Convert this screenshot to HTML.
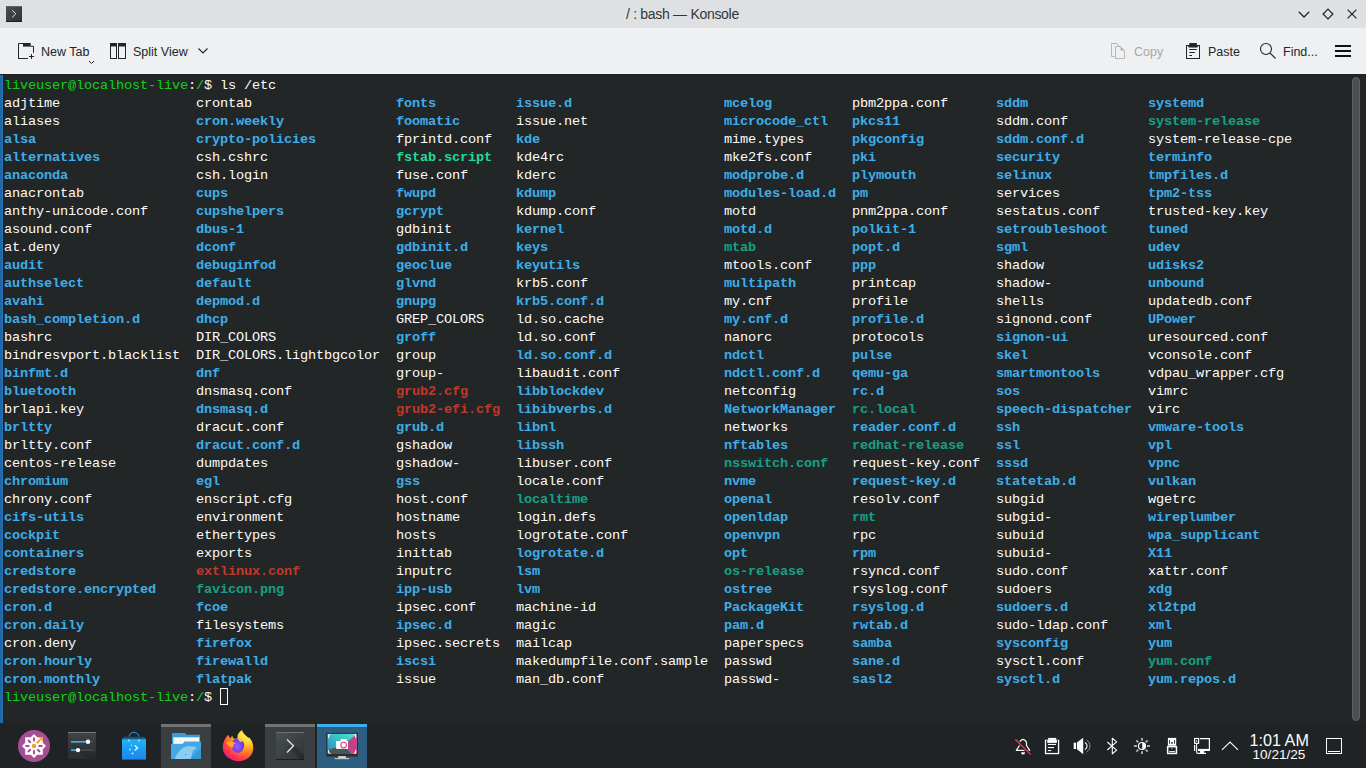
<!DOCTYPE html>
<html><head><meta charset="utf-8">
<style>
*{margin:0;padding:0;box-sizing:border-box}
html,body{width:1366px;height:768px;overflow:hidden;background:#232627}
body{position:relative;font-family:"Liberation Sans",sans-serif}
svg{position:absolute;overflow:visible}
#title{position:absolute;left:0;top:0;width:1366px;height:28px;background:#dee0e2}
#toolbar{position:absolute;left:0;top:28px;width:1366px;height:46px;background:#eff0f1}
#tline{position:absolute;left:0;top:74px;width:1366px;height:1px;background:#1d2023}
#term{position:absolute;left:0;top:75px;width:1366px;height:648px;background:#232627;overflow:hidden}
#strip{position:absolute;left:0;top:0;width:3px;height:648px;background:#2167a3;border-right:1px solid #2974b3}
#stripb{position:absolute;left:3px;top:0;width:1px;height:648px;background:#1e2122}
#bline{position:absolute;left:0;top:723px;width:1366px;height:1px;background:#252426}
#panel{position:absolute;left:0;top:724px;width:1366px;height:44px;background:#202326}
.mono{font-family:"Liberation Mono",monospace;font-size:13.6px;letter-spacing:-0.16px;line-height:18px;color:#fcfcfc;white-space:pre}
.col{position:absolute;top:20px}
.prompt{position:absolute;left:4px}
.g{color:#11d116}
b{font-weight:bold}
b.b{color:#3daee9}
b.l{color:#16a085}
b.x{color:#1cdc9a}
b.r{color:#c0392b}
.t{position:absolute;white-space:nowrap}
#scroll{position:absolute;left:1352px;top:2px;width:8px;height:644px;border-radius:4px;background:#4d4f51;border:1px solid #5e6163}
#cursor{position:absolute;left:220px;top:613px;width:8px;height:17px;border:1px solid #fcfcfc}
.tb{font-size:12.5px;color:#232629}
.task{position:absolute;top:0;width:50px;height:44px;background:#3b3e41;border-top:3px solid #707274}
</style></head><body>
<div id="title">
 <svg style="left:6px;top:6px" width="16" height="16" viewBox="0 0 16 16">
  <defs><linearGradient id="kg" x1="0" y1="0" x2="1" y2="1"><stop offset="0" stop-color="#4a5152"/><stop offset="1" stop-color="#2c3132"/></linearGradient></defs>
  <rect x="0" y="0" width="16" height="16" fill="url(#kg)"/>
  <rect x="0" y="0" width="16" height="1" fill="#5d6466"/>
  <rect x="0" y="15" width="16" height="1" fill="#1b1e1f"/>
  <path d="M6.2,4.2 L9.8,7.8 L6.2,11.4" fill="none" stroke="#e6e6e6" stroke-width="1"/>
 </svg>
 <div class="t" style="left:626px;top:6px;font-size:14px;letter-spacing:-0.3px;color:#31363b">/ : bash — Konsole</div>
 <svg style="left:1296px;top:6px" width="70" height="18" viewBox="1296 6 70 18">
  <path d="M1298.8,11.8 L1304,17 L1309.2,11.8" fill="none" stroke="#232629" stroke-width="1.25"/>
  <path d="M1328,9.1 L1332.9,14 L1328,18.9 L1323.1,14 Z" fill="none" stroke="#232629" stroke-width="1.25"/>
  <path d="M1347.6,9.6 L1356.4,18.4 M1356.4,9.6 L1347.6,18.4" fill="none" stroke="#232629" stroke-width="1.25"/>
 </svg>
</div>
<div id="toolbar">
 <svg style="left:18px;top:15px" width="16" height="16" viewBox="0 0 16 16">
  <path d="M0.5,16 V0.5 H5" fill="none" stroke="#232629" stroke-width="1"/>
  <rect x="5" y="0" width="7.7" height="3.6" fill="#232629"/>
  <path d="M12.5,3.3 H15.5 V9.8 M0,15.5 H9.9 M13.5,11 V16 M11,13.5 H16" fill="none" stroke="#232629" stroke-width="1"/>
 </svg>
 <div class="t tb" style="left:41px;top:17px">New Tab</div>
 <svg style="left:88px;top:32px" width="8" height="5" viewBox="0 0 8 5"><path d="M1,1 L3.5,3.5 L6,1" fill="none" stroke="#232629" stroke-width="1"/></svg>
 <svg style="left:110px;top:15px" width="16" height="16" viewBox="0 0 16 16">
  <rect x="0.5" y="0.5" width="6" height="15" fill="none" stroke="#232629"/>
  <rect x="8.5" y="0.5" width="7" height="15" fill="none" stroke="#232629"/>
  <rect x="0" y="0" width="7" height="3.5" fill="#232629"/>
  <rect x="8" y="0" width="8" height="3.5" fill="#232629"/>
 </svg>
 <div class="t tb" style="left:133px;top:17px">Split View</div>
 <svg style="left:196px;top:18px" width="14" height="10" viewBox="0 0 14 10"><path d="M2.5,2.5 L7,7 L11.5,2.5" fill="none" stroke="#232629" stroke-width="1.1"/></svg>

 <svg style="left:1110px;top:15px" width="16" height="16" viewBox="0 0 16 16">
  <path d="M4.5,13.5 H1.5 V0.5 H6.8 L9.5,3.2" fill="none" stroke="#b4b6b8" stroke-width="1"/>
  <path d="M5.5,15.5 V3.5 H10.5 L14.5,7.5 V15.5 Z" fill="#eff0f1" stroke="#b4b6b8" stroke-width="1"/>
  <path d="M10.5,3.5 V7.5 H14.5 Z" fill="#b4b6b8"/>
 </svg>
 <div class="t tb" style="left:1134px;top:17px;color:#a6a8aa">Copy</div>
 <svg style="left:1185px;top:15px" width="16" height="16" viewBox="0 0 16 16">
  <rect x="1.5" y="2.5" width="13" height="13" fill="none" stroke="#232629"/>
  <rect x="4.3" y="0" width="7.5" height="4.3" fill="#232629"/>
  <rect x="3.2" y="2" width="9.6" height="2.3" fill="#232629"/>
  <path d="M4.3,6.5 H11.8 M4.3,9.5 H9.9 M4.3,12.5 H7" stroke="#232629" stroke-width="1"/>
 </svg>
 <div class="t tb" style="left:1208px;top:17px">Paste</div>
 <svg style="left:1260px;top:15px" width="16" height="16" viewBox="0 0 16 16">
  <circle cx="6" cy="6" r="5.5" fill="none" stroke="#232629" stroke-width="1.1"/>
  <path d="M10,10 L15.5,15.5" stroke="#232629" stroke-width="1.1"/>
 </svg>
 <div class="t tb" style="left:1283px;top:17px">Find...</div>
 <svg style="left:1335px;top:17px" width="16" height="12" viewBox="0 0 16 12">
  <rect x="0" y="0" width="16" height="2" fill="#0f1113"/>
  <rect x="0" y="5" width="16" height="2" fill="#0f1113"/>
  <rect x="0" y="10" width="16" height="2" fill="#0f1113"/>
 </svg>
</div>
<div id="tline"></div>
<div id="term" class="mono">
<div id="strip"></div><div id="stripb"></div>
<div class="prompt" style="top:2px"><span class="g">liveuser@localhost-live</span>:<span class="g">/</span>$ ls /etc</div>
<div class="col" style="left:4px">adjtime<br>aliases<br><b class="b">alsa</b><br><b class="b">alternatives</b><br><b class="b">anaconda</b><br>anacrontab<br>anthy-unicode.conf<br>asound.conf<br>at.deny<br><b class="b">audit</b><br><b class="b">authselect</b><br><b class="b">avahi</b><br><b class="b">bash_completion.d</b><br>bashrc<br>bindresvport.blacklist<br><b class="b">binfmt.d</b><br><b class="b">bluetooth</b><br>brlapi.key<br><b class="b">brltty</b><br>brltty.conf<br>centos-release<br><b class="b">chromium</b><br>chrony.conf<br><b class="b">cifs-utils</b><br><b class="b">cockpit</b><br><b class="b">containers</b><br><b class="b">credstore</b><br><b class="b">credstore.encrypted</b><br><b class="b">cron.d</b><br><b class="b">cron.daily</b><br>cron.deny<br><b class="b">cron.hourly</b><br><b class="b">cron.monthly</b></div>
<div class="col" style="left:196px">crontab<br><b class="b">cron.weekly</b><br><b class="b">crypto-policies</b><br>csh.cshrc<br>csh.login<br><b class="b">cups</b><br><b class="b">cupshelpers</b><br><b class="b">dbus-1</b><br><b class="b">dconf</b><br><b class="b">debuginfod</b><br><b class="b">default</b><br><b class="b">depmod.d</b><br><b class="b">dhcp</b><br>DIR_COLORS<br>DIR_COLORS.lightbgcolor<br><b class="b">dnf</b><br>dnsmasq.conf<br><b class="b">dnsmasq.d</b><br>dracut.conf<br><b class="b">dracut.conf.d</b><br>dumpdates<br><b class="b">egl</b><br>enscript.cfg<br>environment<br>ethertypes<br>exports<br><b class="r">extlinux.conf</b><br><b class="l">favicon.png</b><br><b class="b">fcoe</b><br>filesystems<br><b class="b">firefox</b><br><b class="b">firewalld</b><br><b class="b">flatpak</b></div>
<div class="col" style="left:396px"><b class="b">fonts</b><br><b class="b">foomatic</b><br>fprintd.conf<br><b class="x">fstab.script</b><br>fuse.conf<br><b class="b">fwupd</b><br><b class="b">gcrypt</b><br>gdbinit<br><b class="b">gdbinit.d</b><br><b class="b">geoclue</b><br><b class="b">glvnd</b><br><b class="b">gnupg</b><br>GREP_COLORS<br><b class="b">groff</b><br>group<br>group-<br><b class="r">grub2.cfg</b><br><b class="r">grub2-efi.cfg</b><br><b class="b">grub.d</b><br>gshadow<br>gshadow-<br><b class="b">gss</b><br>host.conf<br>hostname<br>hosts<br>inittab<br>inputrc<br><b class="b">ipp-usb</b><br>ipsec.conf<br><b class="b">ipsec.d</b><br>ipsec.secrets<br><b class="b">iscsi</b><br>issue</div>
<div class="col" style="left:516px"><b class="b">issue.d</b><br>issue.net<br><b class="b">kde</b><br>kde4rc<br>kderc<br><b class="b">kdump</b><br>kdump.conf<br><b class="b">kernel</b><br><b class="b">keys</b><br><b class="b">keyutils</b><br>krb5.conf<br><b class="b">krb5.conf.d</b><br>ld.so.cache<br>ld.so.conf<br><b class="b">ld.so.conf.d</b><br>libaudit.conf<br><b class="b">libblockdev</b><br><b class="b">libibverbs.d</b><br><b class="b">libnl</b><br><b class="b">libssh</b><br>libuser.conf<br>locale.conf<br><b class="l">localtime</b><br>login.defs<br>logrotate.conf<br><b class="b">logrotate.d</b><br><b class="b">lsm</b><br><b class="b">lvm</b><br>machine-id<br>magic<br>mailcap<br>makedumpfile.conf.sample<br>man_db.conf</div>
<div class="col" style="left:724px"><b class="b">mcelog</b><br><b class="b">microcode_ctl</b><br>mime.types<br>mke2fs.conf<br><b class="b">modprobe.d</b><br><b class="b">modules-load.d</b><br>motd<br><b class="b">motd.d</b><br><b class="l">mtab</b><br>mtools.conf<br><b class="b">multipath</b><br>my.cnf<br><b class="b">my.cnf.d</b><br>nanorc<br><b class="b">ndctl</b><br><b class="b">ndctl.conf.d</b><br>netconfig<br><b class="b">NetworkManager</b><br>networks<br><b class="b">nftables</b><br><b class="l">nsswitch.conf</b><br><b class="b">nvme</b><br><b class="b">openal</b><br><b class="b">openldap</b><br><b class="b">openvpn</b><br><b class="b">opt</b><br><b class="l">os-release</b><br><b class="b">ostree</b><br><b class="b">PackageKit</b><br><b class="b">pam.d</b><br>paperspecs<br>passwd<br>passwd-</div>
<div class="col" style="left:852px">pbm2ppa.conf<br><b class="b">pkcs11</b><br><b class="b">pkgconfig</b><br><b class="b">pki</b><br><b class="b">plymouth</b><br><b class="b">pm</b><br>pnm2ppa.conf<br><b class="b">polkit-1</b><br><b class="b">popt.d</b><br><b class="b">ppp</b><br>printcap<br>profile<br><b class="b">profile.d</b><br>protocols<br><b class="b">pulse</b><br><b class="b">qemu-ga</b><br><b class="b">rc.d</b><br><b class="l">rc.local</b><br><b class="b">reader.conf.d</b><br><b class="l">redhat-release</b><br>request-key.conf<br><b class="b">request-key.d</b><br>resolv.conf<br><b class="l">rmt</b><br>rpc<br><b class="b">rpm</b><br>rsyncd.conf<br>rsyslog.conf<br><b class="b">rsyslog.d</b><br><b class="b">rwtab.d</b><br><b class="b">samba</b><br><b class="b">sane.d</b><br><b class="b">sasl2</b></div>
<div class="col" style="left:996px"><b class="b">sddm</b><br>sddm.conf<br><b class="b">sddm.conf.d</b><br><b class="b">security</b><br><b class="b">selinux</b><br>services<br>sestatus.conf<br><b class="b">setroubleshoot</b><br><b class="b">sgml</b><br>shadow<br>shadow-<br>shells<br>signond.conf<br><b class="b">signon-ui</b><br><b class="b">skel</b><br><b class="b">smartmontools</b><br><b class="b">sos</b><br><b class="b">speech-dispatcher</b><br><b class="b">ssh</b><br><b class="b">ssl</b><br><b class="b">sssd</b><br><b class="b">statetab.d</b><br>subgid<br>subgid-<br>subuid<br>subuid-<br>sudo.conf<br>sudoers<br><b class="b">sudoers.d</b><br>sudo-ldap.conf<br><b class="b">sysconfig</b><br>sysctl.conf<br><b class="b">sysctl.d</b></div>
<div class="col" style="left:1148px"><b class="b">systemd</b><br><b class="l">system-release</b><br>system-release-cpe<br><b class="b">terminfo</b><br><b class="b">tmpfiles.d</b><br><b class="b">tpm2-tss</b><br>trusted-key.key<br><b class="b">tuned</b><br><b class="b">udev</b><br><b class="b">udisks2</b><br><b class="b">unbound</b><br>updatedb.conf<br><b class="b">UPower</b><br>uresourced.conf<br>vconsole.conf<br>vdpau_wrapper.cfg<br>vimrc<br>virc<br><b class="b">vmware-tools</b><br><b class="b">vpl</b><br><b class="b">vpnc</b><br><b class="b">vulkan</b><br>wgetrc<br><b class="b">wireplumber</b><br><b class="b">wpa_supplicant</b><br><b class="b">X11</b><br>xattr.conf<br><b class="b">xdg</b><br><b class="b">xl2tpd</b><br><b class="b">xml</b><br><b class="b">yum</b><br><b class="l">yum.conf</b><br><b class="b">yum.repos.d</b></div>
<div class="prompt" style="top:614px"><span class="g">liveuser@localhost-live</span>:<span class="g">/</span>$ </div>
<div id="cursor"></div>
<div id="scroll"></div>
</div>
<div id="bline"></div>
<div id="panel">
 <!-- kickoff -->
 <svg style="left:18px;top:6px" width="32" height="32" viewBox="0 0 32 32">
  <circle cx="16" cy="16" r="16" fill="#a54e95"/>
  <path d="M16,4 L19.2,7.2 H24.8 V12.8 L28,16 L24.8,19.2 V24.8 H19.2 L16,28 L12.8,24.8 H7.2 V19.2 L4,16 L7.2,12.8 V7.2 H12.8 Z" fill="#fff"/>
  <g stroke="#a54e95" stroke-width="2">
   <path d="M16,7.4 V11.2 M16,20.2 V24.2 M7.4,16 H11.4 M20.4,16 H24.4 M10,10 L12.7,12.7 M19.3,19.3 L22,22 M10,22 L12.7,19.3"/>
  </g>
  <path d="M18.8,13.2 L22.2,9.8" stroke="#f0a020" stroke-width="2"/>
  <path d="M20.5,7.2 H24.8 V11.5 Z" fill="#f0a020"/>
  <circle cx="16" cy="16" r="2.2" fill="#f0a020"/>
 </svg>
 <!-- settings -->
 <svg style="left:68px;top:8px" width="28" height="28" viewBox="0 0 28 28">
  <defs><linearGradient id="sg" x1="0" y1="0" x2="0" y2="1"><stop offset="0" stop-color="#414446"/><stop offset="1" stop-color="#2a2c2e"/></linearGradient></defs>
  <rect x="0" y="0" width="28" height="27" fill="url(#sg)"/>
  <rect x="0" y="0" width="28" height="1" fill="#77797b"/>
  <path d="M3,12 L18,27 H28 V20 Z" fill="#000" opacity="0.12"/>
  <rect x="3" y="9" width="22" height="1.6" fill="#4a4c4e"/>
  <rect x="3" y="9" width="17" height="1.6" fill="#3daee9"/>
  <circle cx="20" cy="9.8" r="2.2" fill="#fff"/>
  <rect x="3" y="17.3" width="22" height="1.6" fill="#4a4c4e"/>
  <rect x="3" y="17.3" width="7" height="1.6" fill="#3daee9"/>
  <circle cx="10" cy="18.1" r="2.2" fill="#fff"/>
 </svg>
 <!-- discover -->
 <svg style="left:120px;top:7px" width="28" height="30" viewBox="0 0 28 30">
  <defs><linearGradient id="dg" x1="0" y1="0" x2="0" y2="1"><stop offset="0" stop-color="#1fb4f4"/><stop offset="1" stop-color="#1d84ef"/></linearGradient>
  <linearGradient id="dfl" x1="0" y1="0" x2="0" y2="1"><stop offset="0" stop-color="#1c3a4e"/><stop offset="1" stop-color="#1f6e9c"/></linearGradient></defs>
  <path d="M9.2,9 V6 A4.8,4.6 0 0 1 18.8,6 V9" fill="none" stroke="#1d8bd2" stroke-width="1.2"/>
  <path d="M4,5.5 H24 L26,8.2 H2 Z" fill="url(#dfl)"/>
  <rect x="2" y="8.2" width="24" height="20.4" fill="url(#dg)"/>
  <rect x="8.2" y="8.8" width="1.6" height="1.6" fill="#bfe3f7"/>
  <rect x="18.2" y="8.8" width="1.6" height="1.6" fill="#bfe3f7"/>
  <path d="M14.8,14.5 L17.5,17 L14.8,19.5" fill="none" stroke="#e8f6fd" stroke-width="1.5"/>
  <circle cx="11.5" cy="14.2" r="0.7" fill="#cdeafb"/>
  <circle cx="10" cy="18.5" r="0.9" fill="#cdeafb"/>
  <circle cx="12.5" cy="22.6" r="1" fill="#cdeafb"/>
 </svg>
 <!-- dolphin task -->
 <div class="task" style="left:161px"></div>
 <svg style="left:171px;top:9px" width="30" height="27" viewBox="0 0 30 27">
  <path d="M1,0 H14 L15.5,1.8 H29 V26 H1 Z" fill="#3a9ad6"/>
  <rect x="2.3" y="4.3" width="26" height="6.6" fill="#f6f6f6"/>
  <path d="M0,11 H11.5 L13.5,8.5 H30 V26 H0 Z" fill="#44a8e4"/>
  <path d="M3.8,26 C6,21 10,14.8 15,13.6 C18,12.9 22,13.2 25.9,14.3 C25,15.5 24,16.5 22.9,17.1 C21.5,19 20.5,22.5 19.9,26 Z" fill="#a6d8f5" opacity="0.75"/><circle cx="14.8" cy="21.3" r="0.6" fill="#3a8fc8"/>
  <path d="M19,26 L30,15 V26 Z" fill="#2a84c0" opacity="0.45"/>
 </svg>
 <!-- firefox -->
 <svg style="left:222px;top:6px" width="32" height="32" viewBox="0 0 32 32">
  <defs>
   <radialGradient id="ff1" cx="0.8" cy="0.1" r="1.05"><stop offset="0" stop-color="#fff44f"/><stop offset="0.3" stop-color="#ffd43a"/><stop offset="0.55" stop-color="#ff8a1e"/><stop offset="0.78" stop-color="#ff3d4a"/><stop offset="1" stop-color="#e8147a"/></radialGradient>
   <radialGradient id="ff2" cx="0.45" cy="0.55" r="0.6"><stop offset="0" stop-color="#9a5cff"/><stop offset="1" stop-color="#6a31d6"/></radialGradient>
  </defs>
  <path d="M6,4.8 L8.5,8.5 L10,5.8 L12,9 C13,8.5 14.5,8.2 15.5,8.2 C15,5 16.5,2 20,0 C20.5,3 24,5.5 26,7.5 L27.5,7.8 C30,10.5 31.3,14 31.3,18 C31.3,25.5 24.6,31.2 16.5,31.2 C8,31.2 0.7,25 0.7,17.5 C0.7,12.5 3,8 6,4.8 Z" fill="url(#ff1)"/>
  <ellipse cx="15.8" cy="15.6" rx="6.4" ry="7.3" fill="url(#ff2)"/>
  <path d="M4,12.5 C7,11 11,11.8 14,12.8 C12,13.8 10.8,15.5 11,18 C8,17 5.5,15 4,12.5 Z" fill="#ffa62e"/>
  <path d="M15,8.3 C18.5,7.8 21.5,9 23,11.5 C21,11 19.5,11.3 18.3,12 Z" fill="#ffc93a"/>
 </svg>
 <!-- konsole task -->
 <div class="task" style="left:265px"></div>
 <svg style="left:276px;top:8px" width="28" height="28" viewBox="0 0 28 28">
  <defs><linearGradient id="kg2" x1="0" y1="0" x2="1" y2="1"><stop offset="0" stop-color="#4b5253"/><stop offset="1" stop-color="#2d3233"/></linearGradient></defs>
  <rect x="0" y="0" width="28" height="28" fill="url(#kg2)"/>
  <rect x="0" y="0" width="28" height="1" fill="#6b7173"/>
  <rect x="0" y="27" width="28" height="1" fill="#1c1f20"/>
  <path d="M11,14 L25,28 H28 V23 L18,13 Z" fill="#000" opacity="0.18"/>
  <path d="M11,7.5 L17.5,13.8 L11,20.5" fill="none" stroke="#e4e4e4" stroke-width="1.3"/>
 </svg>
 <!-- spectacle task -->
 <div class="task" style="left:317px;background:#2d5d80;border-top-color:#3daee9"></div>
 <svg style="left:326px;top:8px" width="32" height="28" viewBox="0 0 32 28">
  <defs>
   <linearGradient id="spg" x1="0" y1="1" x2="1" y2="0"><stop offset="0" stop-color="#2f86c4"/><stop offset="1" stop-color="#48ecc8"/></linearGradient>
   <linearGradient id="spp" x1="0" y1="0" x2="1" y2="1"><stop offset="0" stop-color="#a8489a"/><stop offset="1" stop-color="#d43f7a"/></linearGradient>
  </defs>
  <rect x="0.2" y="0.9" width="31.7" height="23.7" fill="#2b2f33"/>
  <rect x="1.4" y="1.9" width="29.5" height="20.1" fill="url(#spg)"/>
  <path d="M17.3,12.9 L1.4,18.3 V22 H26 Z" fill="#4a5656"/>
  <path d="M17.3,12.9 L30.9,2.1 V22 H26 Z" fill="url(#spp)"/>
  <rect x="10.1" y="9.1" width="11.9" height="7.8" fill="#fff"/>
  <rect x="14.7" y="7" width="5.9" height="2.2" fill="#fff"/>
  <circle cx="17.6" cy="13.1" r="2.8" fill="none" stroke="#e0407a" stroke-width="1.1"/>
  <path d="M2.6,6 V2.7 H4.6 M27.7,2.7 H29.7 V6 M2.6,18 V21.2 H4.6 M29.7,18 V21.2 H27.7" fill="none" stroke="#fff" stroke-width="1"/>
  <rect x="12.2" y="24.1" width="7.7" height="1.9" fill="#d8d8d8"/>
  <rect x="8.7" y="26" width="14.5" height="1.2" fill="#b8c0c4"/>
 </svg>
 <!-- tray -->
 <svg style="left:1010px;top:10px" width="240" height="24" viewBox="1010 734 240 24">
  <path d="M1016.3,750.3 L1019.5,745.5 V743.5 C1019.5,741 1021,739.8 1023,739.3 C1025,739.8 1026.5,741 1026.5,743.5 V745.5 L1029.7,750.3 Z" fill="none" stroke="#fcfcfc" stroke-width="1.2" stroke-linejoin="round"/>
  <path d="M1021.2,752.2 H1024.9 V753 A1.85,1.6 0 0 1 1021.2,753 Z" fill="#fcfcfc"/>
  <path d="M1015.3,739.3 L1030.8,754.6" stroke="#202326" stroke-width="3"/>
  <path d="M1015.3,739.3 L1030.8,754.6" stroke="#da4453" stroke-width="1.3"/>

  <rect x="1045.55" y="740.35" width="13" height="13.2" fill="none" stroke="#fcfcfc" stroke-width="1.3"/>
  <rect x="1046.5" y="739.2" width="11.2" height="4.2" fill="#202326"/>
  <rect x="1047.2" y="739.7" width="9.7" height="3.2" fill="#fcfcfc"/>
  <rect x="1048.2" y="737.9" width="8" height="2" fill="#fcfcfc"/>
  <rect x="1047.9" y="743.9" width="8.1" height="1.1" fill="#fcfcfc"/>
  <rect x="1047.9" y="747" width="6.1" height="1.1" fill="#fcfcfc"/>
  <rect x="1047.9" y="750" width="3.3" height="1.1" fill="#fcfcfc"/>

  <rect x="1073.7" y="742.7" width="2.4" height="6.3" fill="#fcfcfc"/>
  <path d="M1077,742.6 L1083.2,737.7 V754.3 L1077,749.2 Z" fill="#fcfcfc"/>
  <path d="M1085,742.5 A4,4 0 0 1 1085,749.5" fill="none" stroke="#fcfcfc" stroke-width="1.1"/>
  <path d="M1086.6,740 A7,7 0 0 1 1086.6,752" fill="none" stroke="#8a8c8e" stroke-width="1"/>

  <path d="M1107.3,742 L1116.6,750.2 L1112.3,753.8 V738.2 L1116.6,741.8 L1107.3,750" fill="none" stroke="#fcfcfc" stroke-width="1.1" stroke-linejoin="round"/>

  <circle cx="1142" cy="746" r="3.5" fill="none" stroke="#fcfcfc" stroke-width="1.2"/>
  <path d="M1142.2,742.5 A3.5,3.5 0 0 1 1142.2,749.5 Z" fill="#fcfcfc"/>
  <g stroke="#a8a9aa" stroke-width="2">
   <path d="M1142,738 V740.7 M1142,751.2 V754 M1133.9,746 H1137 M1147,746 H1150 M1136.3,740.4 L1138.3,742.4 M1145.7,749.6 L1147.7,751.6 M1136.3,751.6 L1138.3,749.6 M1145.7,742.4 L1147.7,740.4"/>
  </g>

  <rect x="1167.9" y="737.9" width="8.3" height="7.8" fill="#fcfcfc"/>
  <rect x="1169.1" y="740.2" width="0.9" height="3.5" fill="#202326"/>
  <rect x="1174.1" y="740.2" width="0.9" height="3.5" fill="#202326"/>
  <circle cx="1171.9" cy="742.9" r="0.9" fill="#202326"/>
  <rect x="1167.65" y="746.65" width="8.8" height="6.8" fill="none" stroke="#fcfcfc" stroke-width="1.5"/>
  <rect x="1169.2" y="751.1" width="5.8" height="1" fill="#fcfcfc"/>
  <rect x="1171" y="748.3" width="2" height="0.8" fill="#8a8c8e"/>

  <rect x="1194.6" y="738.5" width="4" height="4.8" fill="none" stroke="#fcfcfc" stroke-width="1.2"/>
  <rect x="1196.2" y="740.3" width="0.9" height="1.6" fill="#fcfcfc"/>
  <path d="M1200,738.6 H1209.4 V750.3 H1198" fill="none" stroke="#fcfcfc" stroke-width="1.2"/>
  <rect x="1198" y="748.9" width="12" height="2" fill="#fcfcfc"/>
  <rect x="1199.9" y="750.5" width="4.3" height="2.5" fill="#fcfcfc"/>
  <rect x="1198" y="752.8" width="8" height="1.2" fill="#fcfcfc"/>
  <path d="M1196.6,743.9 V752 Q1196.6,753.4 1198,753.4" fill="none" stroke="#fcfcfc" stroke-width="1.1"/>
  <rect x="1194" y="744.9" width="1.2" height="6.1" fill="#fcfcfc"/>

  <path d="M1222,749.8 L1230,742 L1238,749.8" fill="none" stroke="#fcfcfc" stroke-width="1.1"/>
 </svg>
 <div class="t" style="left:1249.5px;top:7px;font-size:16.2px;color:#fcfcfc">1:01 AM</div>
 <div class="t" style="left:1252.5px;top:23px;font-size:13.6px;color:#fcfcfc">10/21/25</div>
 <svg style="left:1326px;top:14px" width="16" height="16" viewBox="0 0 16 16">
  <rect x="0.5" y="0.5" width="15" height="15" fill="none" stroke="#fcfcfc" stroke-width="1"/>
  <rect x="2" y="13" width="12" height="1" fill="#fcfcfc"/>
 </svg>

</div>
</body></html>
